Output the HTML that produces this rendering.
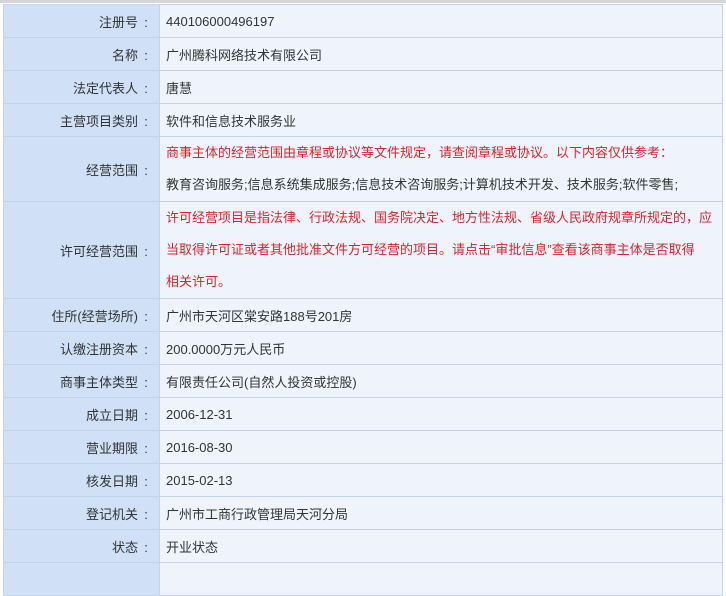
<!DOCTYPE html>
<html><head><meta charset="utf-8">
<style>
html,body{margin:0;padding:0;width:726px;height:567px;overflow:hidden;background:#fff;}
body{font-family:"Liberation Sans","Microsoft YaHei","Noto Sans CJK SC",sans-serif;font-size:13px;color:#333;}
.top{position:absolute;left:0;top:0;width:726px;height:3px;background:#d6d6d6;}
table{position:absolute;left:3px;top:4px;border-collapse:collapse;width:720px;table-layout:fixed;}
td{border:1px solid #c5d3ea;padding:0;}
td.l{width:148px;background:#cfe0f7;text-align:right;padding-right:7px;}
td.l i{font-style:normal;display:inline-block;width:12px;text-align:center;margin-left:2px;}
td.r{background:#eef3fc;padding-left:6px;white-space:nowrap;overflow:hidden;}
tr{height:33px;}
.red{color:#d8262b;}
.ml{line-height:32px;}
</style></head><body>
<div class="top"></div>
<table>
<tr><td class="l">注册号<i>:</i></td><td class="r">440106000496197</td></tr>
<tr><td class="l">名称<i>:</i></td><td class="r">广州腾科网络技术有限公司</td></tr>
<tr><td class="l">法定代表人<i>:</i></td><td class="r">唐慧</td></tr>
<tr><td class="l">主营项目类别<i>:</i></td><td class="r">软件和信息技术服务业</td></tr>
<tr style="height:65px"><td class="l">经营范围<i>:</i></td><td class="r ml"><span class="red">商事主体的经营范围由章程或协议等文件规定，请查阅章程或协议。以下内容仅供参考：</span><br>教育咨询服务;信息系统集成服务;信息技术咨询服务;计算机技术开发、技术服务;软件零售;</td></tr>
<tr style="height:96px"><td class="l">许可经营范围<i>:</i></td><td class="r ml red">许可经营项目是指法律、行政法规、国务院决定、地方性法规、省级人民政府规章所规定的，应<br>当取得许可证或者其他批准文件方可经营的项目。请点击“审批信息”查看该商事主体是否取得<br>相关许可。</td></tr>
<tr><td class="l">住所(经营场所)<i>:</i></td><td class="r">广州市天河区棠安路188号201房</td></tr>
<tr><td class="l">认缴注册资本<i>:</i></td><td class="r">200.0000万元人民币</td></tr>
<tr><td class="l">商事主体类型<i>:</i></td><td class="r">有限责任公司(自然人投资或控股)</td></tr>
<tr><td class="l">成立日期<i>:</i></td><td class="r">2006-12-31</td></tr>
<tr><td class="l">营业期限<i>:</i></td><td class="r">2016-08-30</td></tr>
<tr><td class="l">核发日期<i>:</i></td><td class="r">2015-02-13</td></tr>
<tr><td class="l">登记机关<i>:</i></td><td class="r">广州市工商行政管理局天河分局</td></tr>
<tr><td class="l">状态<i>:</i></td><td class="r">开业状态</td></tr>
<tr><td class="l"></td><td class="r"></td></tr>
</table>
</body></html>
